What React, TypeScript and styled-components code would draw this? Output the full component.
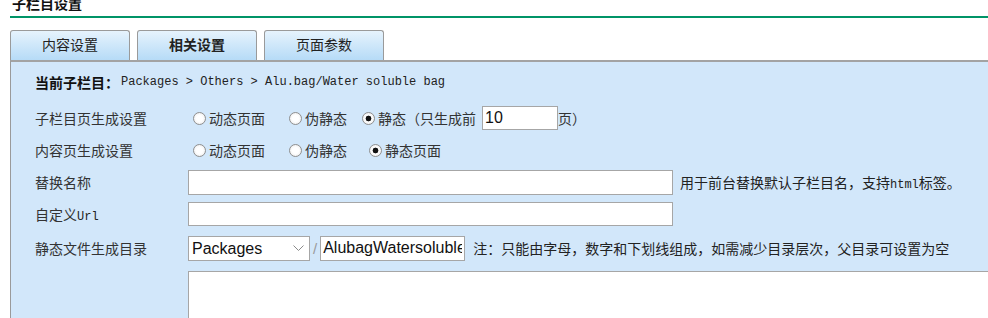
import React from 'react';
import styled, { createGlobalStyle } from 'styled-components';

const GlobalStyle = createGlobalStyle`
  html, body {
    margin: 0;
    padding: 0;
    background: #ffffff;
    overflow: hidden;
  }
  body {
    font-family: "Liberation Sans", "Noto Sans CJK SC", sans-serif;
    font-size: 14px;
    color: #333333;
  }
`;

const Page = styled.div`
  padding-left: 10px;
  width: 1100px;
`;

const Title = styled.div`
  margin-top: -4px;
  height: 20px;
  line-height: 16px;
  padding-left: 2px;
  font-size: 14px;
  font-weight: bold;
  color: #111;
  border-bottom: 2px solid #009467;
`;

const TabBar = styled.div`
  display: flex;
  gap: 7px;
  margin-top: 12px;
  height: 30px;
`;

const Tab = styled.div<{ $active?: boolean }>`
  width: 118px;
  height: 29px;
  line-height: 29px;
  text-align: center;
  font-size: 14px;
  font-weight: ${p => (p.$active ? 'bold' : 'normal')};
  color: #222;
  border: 1px solid #9a9a9a;
  border-bottom: none;
  border-radius: 3px 3px 0 0;
  background: linear-gradient(#e6f3fd, #b6dbf7);
`;

const Panel = styled.div`
  background: #d2e7fa;
  border-top: 2px solid #a3a3a3;
  border-left: 1px solid #9a9a9a;
`;

const Row = styled.div<{ $h: number }>`
  display: grid;
  grid-template-columns: 177px 1fr;
  height: ${p => p.$h}px;
  align-items: center;
`;

const Label = styled.div<{ $bold?: boolean }>`
  padding-left: 24px;
  font-size: 14px;
  font-weight: ${p => (p.$bold ? 'bold' : 'normal')};
  color: ${p => (p.$bold ? '#111' : '#333')};
  white-space: nowrap;
`;

const Cell = styled.div`
  display: flex;
  align-items: center;
  white-space: nowrap;
  font-size: 14px;
`;

const Mono = styled.span<{ $size?: number }>`
  font-family: "Liberation Mono", monospace;
  font-size: ${p => p.$size ?? 12}px;
  color: #222;
`;

const Crumb = styled.div`
  display: flex;
  align-items: center;
  white-space: nowrap;
  grid-column: 1 / span 2;
  padding-left: 24px;
`;

const CrumbLabel = styled.span`
  font-size: 14px;
  font-weight: bold;
  color: #111;
  margin-right: 2px;
`;

const Option = styled.label<{ $gap: number }>`
  display: inline-flex;
  align-items: center;
  margin-right: ${p => p.$gap}px;
`;

const Radio = styled.input.attrs({ type: 'radio' })`
  appearance: none;
  -webkit-appearance: none;
  width: 13px;
  height: 13px;
  margin: 0 3px 0 5px;
  border: 1px solid #8f8f8f;
  border-radius: 50%;
  background: radial-gradient(circle, #ffffff 40%, #e6e6e6 100%);
  box-sizing: border-box;

  &:checked {
    background: radial-gradient(circle, #111 0 2.6px, #fff 3.2px, #e6e6e6 100%);
  }
`;

const TextInput = styled.input<{ $w: number; $h?: number; $ml?: number }>`
  width: ${p => p.$w}px;
  height: ${p => p.$h ?? 25}px;
  margin-left: ${p => p.$ml ?? 0}px;
  box-sizing: border-box;
  border: 1px solid #a6a6a6;
  background: #fff;
  padding: 0 2px;
  font-family: "Liberation Sans", Arial, sans-serif;
  font-size: 16px;
  color: #111;
  outline: none;
`;

const Note = styled.span<{ $ml: number }>`
  margin-left: ${p => p.$ml}px;
  font-size: 14px;
  color: #222;
`;

const SelectWrap = styled.div`
  position: relative;
  width: 122px;
  height: 25px;
`;

const Select = styled.select`
  appearance: none;
  -webkit-appearance: none;
  width: 122px;
  height: 25px;
  box-sizing: border-box;
  border: 1px solid #a6a6a6;
  background: #fff;
  padding: 0 3px;
  font-family: "Liberation Sans", Arial, sans-serif;
  font-size: 16px;
  color: #111;
  outline: none;
`;

const Chevron = styled.svg`
  position: absolute;
  right: 6px;
  top: 9px;
  pointer-events: none;
`;

const Slash = styled.span`
  margin: 0 3px;
  font-family: "Liberation Sans", Arial, sans-serif;
  font-size: 15px;
  color: #9a9a9a;
`;

const AreaRow = styled.div`
  display: grid;
  grid-template-columns: 177px 1fr;
  padding-top: 5px;
`;

const Area = styled.textarea`
  width: 880px;
  height: 120px;
  box-sizing: border-box;
  border: 1px solid #a6a6a6;
  background: #fff;
  resize: none;
  outline: none;
`;

type Opt = { text: string; checked?: boolean; gap: number };

const RadioGroup: React.FC<{ name: string; options: Opt[] }> = ({ name, options }) => (
  <>
    {options.map(o => (
      <Option key={o.text} $gap={o.gap}>
        <Radio name={name} defaultChecked={o.checked} />
        {o.text}
      </Option>
    ))}
  </>
);

export default function App() {
  return (
    <Page>
      <GlobalStyle />
      <Title>子栏目设置</Title>
      <TabBar>
        <Tab>内容设置</Tab>
        <Tab $active>相关设置</Tab>
        <Tab>页面参数</Tab>
      </TabBar>
      <Panel>
        <Row $h={40}>
          <Crumb>
            <CrumbLabel>当前子栏目：</CrumbLabel>
            <Mono>Packages &gt; Others &gt; Alu.bag/Water soluble bag</Mono>
          </Crumb>
        </Row>
        <Row $h={32}>
          <Label>子栏目页生成设置</Label>
          <Cell>
            <RadioGroup
              name="list"
              options={[
                { text: '动态页面', gap: 19 },
                { text: '伪静态', gap: 10 },
                { text: '静态（只生成前', checked: true, gap: 0 },
              ]}
            />
            <TextInput $w={76} $h={24} $ml={6} defaultValue="10" />
            <span>页）</span>
          </Cell>
        </Row>
        <Row $h={32}>
          <Label>内容页生成设置</Label>
          <Cell>
            <RadioGroup
              name="content"
              options={[
                { text: '动态页面', gap: 19 },
                { text: '伪静态', gap: 17 },
                { text: '静态页面', checked: true, gap: 0 },
              ]}
            />
          </Cell>
        </Row>
        <Row $h={32}>
          <Label>替换名称</Label>
          <Cell>
            <TextInput $w={485} />
            <Note $ml={7}>
              用于前台替换默认子栏目名，支持<Mono>html</Mono>标签。
            </Note>
          </Cell>
        </Row>
        <Row $h={32}>
          <Label>
            自定义<Mono>Url</Mono>
          </Label>
          <Cell>
            <TextInput $w={485} $h={24} />
          </Cell>
        </Row>
        <Row $h={36}>
          <Label>静态文件生成目录</Label>
          <Cell>
            <SelectWrap>
              <Select defaultValue="Packages">
                <option>Packages</option>
              </Select>
              <Chevron width="11" height="7" viewBox="0 0 11 7">
                <path d="M0.5 0.5 L5.5 5.5 L10.5 0.5" fill="none" stroke="#8a8a8a" strokeWidth="1" />
              </Chevron>
            </SelectWrap>
            <Slash>/</Slash>
            <TextInput $w={145} defaultValue="AlubagWatersoluble bag" />
            <Note $ml={8}>注：只能由字母，数字和下划线组成，如需减少目录层次，父目录可设置为空</Note>
          </Cell>
        </Row>
        <AreaRow>
          <div />
          <Area />
        </AreaRow>
      </Panel>
    </Page>
  );
}
